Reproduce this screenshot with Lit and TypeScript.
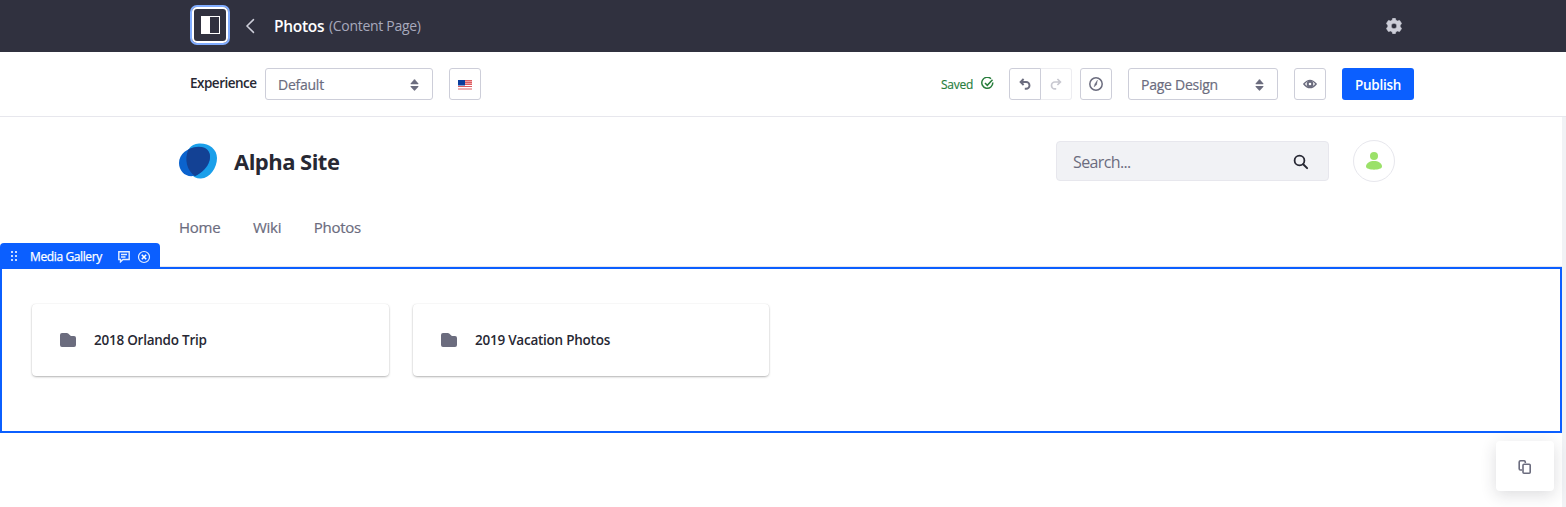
import { LitElement, html, css, svg } from "lit";
import { customElement, property } from "lit/decorators.js";

const caret = svg`<path d="M4.6 6.4 8.1 2.4q.4-.4.8 0l3.5 4q.4.8-.4.8H5q-.8 0-.4-.8z" fill="#6b6c7e"/><path d="M4.6 9.8 8.1 13.6q.4.4.8 0l3.5-3.8q.4-.8-.4-.8H5q-.8 0-.4.8z" fill="#6b6c7e"/>`;

@customElement("folder-card")
class FolderCard extends LitElement {
  @property() label = "";
  static styles = css`
    :host {
      display: flex;
      align-items: center;
      box-sizing: border-box;
      height: 72px;
      padding: 0 28px;
      gap: 18px;
      background: #fff;
      border-radius: 4px;
      box-shadow: 0 1px 3px -1px rgba(0, 0, 0, 0.6), 0 0 1px rgba(0, 0, 0, 0.12);
      font: 600 13.5px/20px "Open Sans", sans-serif;
      color: #272833;
      letter-spacing: -0.24px;
    }
    svg { display: block; }
  `;
  render() {
    return html`<svg width="16" height="16" viewBox="0 0 16 16"><path fill="#6b6c7e" d="M2 1h4.8q.8 0 1.4.6l1.3 1.2q.8.9 1.5 1.1H14q2 0 2 2V13q0 2-2 2H2q-2 0-2-2V3q0-2 2-2z"/></svg><span>${this.label}</span>`;
  }
}

@customElement("app-root")
class AppRoot extends LitElement {
  static styles = css`
    :host {
      display: block;
      height: 507px;
      overflow: hidden;
      background: #fff;
      font-family: "Open Sans", sans-serif;
      color: #272833;
    }
    * { box-sizing: border-box; }
    svg { display: block; flex: none; }
    span { white-space: nowrap; }
    .top {
      height: 52px;
      background: #30313f;
      display: flex;
      align-items: center;
      padding: 0 164px 0 192px;
    }
    .toggle {
      width: 36px;
      height: 36px;
      margin-top: -3px;
      border: 2px solid #fff;
      border-radius: 5px;
      box-shadow: 0 0 0 2px #80acff;
      display: grid;
      place-items: center;
    }
    .back { margin-left: 17px; }
    .title { margin: -1px 0 0 17px; width: 55px; font: 600 15.5px/24px "Open Sans", sans-serif; color: #fff; letter-spacing: -0.3px; }
    .kind { margin-top: -2px; font-size: 14px; color: #a7a9bc; letter-spacing: -0.3px; }
    .gear { margin-left: auto; }
    .tools {
      height: 65px;
      border-bottom: 1px solid #e7e7ed;
      display: flex;
      align-items: center;
      padding: 0 152px 0 190px;
      font-size: 14px;
      line-height: 20px;
    }
    .experience { width: 75px; margin-top: -2px; font-size: 13.5px; font-weight: 600; letter-spacing: -0.5px; }
    .select {
      height: 32px;
      border: 1px solid #cdced9;
      border-radius: 3px;
      display: flex;
      align-items: center;
      justify-content: space-between;
      padding: 1px 10px 0 12px;
      color: #6b6c7e;
      -webkit-text-stroke: 0.2px #6b6c7e;
    }
    .select span { padding-top: 1px; }
    .default { width: 168px; letter-spacing: -0.25px; }
    .design { width: 150px; margin: 0 16px; letter-spacing: -0.26px; }
    .square {
      width: 32px;
      height: 32px;
      border: 1px solid #cdced9;
      border-radius: 3px;
      display: grid;
      place-items: center;
    }
    .flag { margin-left: 16px; padding-top: 1px; }
    .saved { margin-left: auto; width: 40px; padding-top: 1px; font-size: 12px; color: #287d3c; letter-spacing: -0.25px; -webkit-text-stroke: 0.15px #287d3c; }
    .check { margin: -2px 15px 0 0; }
    .undo { border-radius: 3px 0 0 3px; }
    .redo { width: 31px; border-color: #ededf1; border-left: 0; border-radius: 0 3px 3px 0; margin-right: 8px; }
    .publish {
      width: 72px;
      height: 32px;
      margin-left: 16px;
      padding-top: 2px;
      border-radius: 3px;
      background: #0b5fff;
      color: #fff;
      display: grid;
      place-items: center;
      font-size: 13.5px;
      font-weight: 600;
      letter-spacing: -0.25px;
    }
    .page { height: 390px; border-right: 4px solid #f1f2f5; }
    .brand {
      display: flex;
      align-items: center;
      height: 88px;
      padding: 0 167px 0 179px;
    }
    .site { margin-left: 17px; font: 700 22px/30px "Open Sans", sans-serif; letter-spacing: -0.53px; }
    .search {
      width: 273px;
      height: 40px;
      margin-left: auto;
      border: 1px solid #e7e7ed;
      border-radius: 4px;
      background: #f1f2f5;
      display: flex;
      align-items: center;
      justify-content: space-between;
      padding: 2px 19px 0 16px;
      color: #6b6c7e;
      font-size: 16px;
      letter-spacing: -0.62px;
    }
    .avatar {
      width: 42px;
      height: 42px;
      margin-left: 24px;
      border: 1px solid #e7e7ed;
      border-radius: 50%;
      display: grid;
      place-items: center;
    }
    .menu {
      height: 62px;
      border-bottom: 1px solid #e7e7ed;
      padding: 9px 0 0 179px;
      display: flex;
      gap: 32.5px;
      font-size: 15px;
      line-height: 26px;
      letter-spacing: -0.25px;
      color: #6b6c7e;
      -webkit-text-stroke: 0.2px #6b6c7e;
    }
    .gallery {
      position: relative;
      height: 166px;
      border: 2px solid #0b5fff;
      display: grid;
      grid-template-columns: 357px 356px;
      align-content: start;
      gap: 24px;
      padding: 35px 30px;
    }
    .tab {
      position: absolute;
      left: -2px;
      top: -26px;
      width: 160px;
      height: 26px;
      border-radius: 4px 4px 0 0;
      background: #0b5fff;
      color: #fff;
      display: flex;
      align-items: center;
      padding: 2px 9px 0 6px;
      font-size: 12px;
      letter-spacing: -0.38px;
      -webkit-text-stroke: 0.25px #fff;
    }
    .tab span { width: 88px; margin: -2px 0 0 8px; }
    .tab .comment { margin-right: 7px; }
    .floating {
      position: absolute;
      left: 1496px;
      top: 441px;
      width: 58px;
      height: 50px;
      padding-top: 2px;
      background: #fff;
      border-radius: 4px;
      box-shadow: 0 4px 16px rgba(39, 40, 51, 0.16);
      display: grid;
      place-items: center;
    }
  `;

  render() {
    return html`
      <header class="top">
        <div class="toggle">
          <svg width="20" height="18"><rect x="1.5" y=".5" width="18" height="17" fill="none" stroke="#fff"/><path d="M1 0h9v18H1z" fill="#fff"/></svg>
        </div>
        <svg class="back" width="12" height="16" viewBox="0 0 12 16"><path d="M8.5 1.6 2 8l6.5 6.4" fill="none" stroke="#cdced9" stroke-width="1.5" stroke-linecap="round"/></svg>
        <span class="title">Photos</span>
        <span class="kind">(Content Page)</span>
        <svg class="gear" width="16" height="16" viewBox="0 0 16 16"><path fill="#cdced9" stroke="#cdced9" stroke-width=".6" stroke-linejoin="round" fill-rule="evenodd" d="M6.700.3h2.600l.6 1.900 1.400.8 2.300-.6 2 3.100-1.400 1.700v1.600l1.400 1.700-2 3.100-2.300-.6-1.400.8-.6 1.900H6.700l-.6-1.900-1.400-.8-2.300.6-2-3.100 1.400-1.700V7.200L.4 5.500l2-3.100 2.300.6 1.400-.8zM8 5.200a2.800 2.800 0 1 0 0 5.600 2.800 2.800 0 0 0 0-5.600z"/></svg>
      </header>
      <div class="tools">
        <span class="experience">Experience</span>
        <div class="select default"><span>Default</span><svg width="16" height="16">${caret}</svg></div>
        <div class="square flag">
          <svg width="14" height="10">
            <path fill="#fff" d="M0 0h14v10H0z"/>
            <path d="M0 .5h14M0 2.500h14M0 4.500h14M0 6.500h14M0 9h14" stroke="#dd5c61"/>
            <path fill="#f0a0a2" d="M7 1h7v1H7zM7 3h7v1H7z"/>
            <path fill="#0a3d9c" d="M0 0h7v5.500H0z"/>
          </svg>
        </div>
        <span class="saved">Saved</span>
        <svg class="check" width="13" height="13" viewBox="0 0 13 13"><path d="M10 1.700A5.500 5.500 0 1 0 11.800 5.500M4 6l2.300 2.300L11.500 2.800" fill="none" stroke="#287d3c" stroke-width="1.500"/></svg>
        <div class="square undo"><svg width="12" height="12" viewBox="0 0 12 12"><path d="M4.600 1 1.600 4l3 3M1.600 4h5.500a3.200 3.200 0 0 1 0 6.800H5.800" fill="none" stroke="#6b6c7e" stroke-width="1.900"/></svg></div>
        <div class="square redo"><svg width="12" height="12" viewBox="0 0 12 12"><path d="M7.400 1l3 3-3 3M10.400 4H4.900a3.200 3.200 0 0 0 0 6.800h1.300" fill="none" stroke="#c8c8d0" stroke-width="1.700"/></svg></div>
        <div class="square"><svg width="14" height="14" viewBox="0 0 14 14"><circle cx="7" cy="7" r="6.200" fill="none" stroke="#6b6c7e" stroke-width="1.500"/><path d="M8.500 3 7.600 7.800 5 10 5.800 7z" fill="#6b6c7e" stroke="#6b6c7e" stroke-width=".3"/></svg></div>
        <div class="select design"><span>Page Design</span><svg width="16" height="16">${caret}</svg></div>
        <div class="square"><svg width="14" height="10" viewBox="0 0 14 10"><path d="M.8 5Q7-2.300 13.200 5 7 12.300.8 5z" fill="none" stroke="#6b6c7e" stroke-width="1.300"/><circle cx="7" cy="5" r="2.300" fill="none" stroke="#6b6c7e" stroke-width="2"/></svg></div>
        <div class="publish"><span>Publish</span></div>
      </div>
      <main class="page">
        <div class="brand">
          <svg width="38" height="36" viewBox="0 0 38 36"><path d="M20 .5C30 0 38 6 38 15 38 25 31 35 22 35.500 14 36 7 28 7 17 7 8 11 1 20 .5z" fill="#1a9fea"/><path d="M0 20C0 11 9 4.500 18 4c8-.5 13 4 13 10 0 8-6 14-13 18C8 36 0 29 0 20z" fill="#0b63ce"/><path d="M9.400 6.500C15 3.500 21 3 25.500 4.800c5 2.600 6.500 7.500 5 12.500-2 7-7 12-14.500 15.900C8 27.500 5 16.500 9.400 6.500z" fill="#134194"/></svg>
          <span class="site">Alpha Site</span>
          <div class="search"><span>Search...</span><svg width="16" height="16" viewBox="0 0 16 16"><circle cx="6.500" cy="6.500" r="4.900" fill="none" stroke="#272833" stroke-width="1.800"/><path d="m10.200 10.200 3.900 3.900" stroke="#272833" stroke-width="2" stroke-linecap="round"/></svg></div>
          <div class="avatar"><svg width="16" height="18"><circle cx="8" cy="4" r="4" fill="#9be169"/><path d="M0 14.500C0 7 16 7 16 14.500 16 18.700 0 18.700 0 14.500z" fill="#9be169"/></svg></div>
        </div>
        <nav class="menu"><span>Home</span><span>Wiki</span><span>Photos</span></nav>
        <section class="gallery">
          <div class="tab">
            <svg width="16" height="16" fill="#c6dbff"><path d="M5 2h2v2H5zM9 2h2v2H9zM5 6h2v2H5zM9 6h2v2H9zM5 10h2v2H5zM9 10h2v2H9z"/></svg>
            <span>Media Gallery</span>
            <svg class="comment" width="12" height="12" viewBox="0 0 12 12"><path d="M.8.8h10.400v7.700H5L2.500 10.800V8.500H.8zM3 3.500h6M3 6h4.500" fill="none" stroke="#e4eeff" stroke-width="1.400"/></svg>
            <svg width="14" height="14" viewBox="0 0 14 14"><circle cx="7" cy="7" r="5.500" fill="none" stroke="#e4eeff" stroke-width="1.200"/><path d="m4.800 4.800 4.400 4.400m0-4.400L4.800 9.200" stroke="#fff" stroke-width="1.600"/></svg>
          </div>
          <folder-card label="2018 Orlando Trip"></folder-card>
          <folder-card label="2019 Vacation Photos"></folder-card>
        </section>
      </main>
      <div class="floating"><svg width="14" height="14" viewBox="0 0 14 14"><path d="M4 10H2.500Q1.200 10 1.200 8.700V2Q1.200.8 2.500.8H6Q7.300.8 7.300 2v1" fill="none" stroke="#6b6c7e" stroke-width="1.600"/><rect x="5" y="4.200" width="7.200" height="9" rx="1" fill="#fff" stroke="#6b6c7e" stroke-width="1.600"/></svg></div>
    `;
  }
}
